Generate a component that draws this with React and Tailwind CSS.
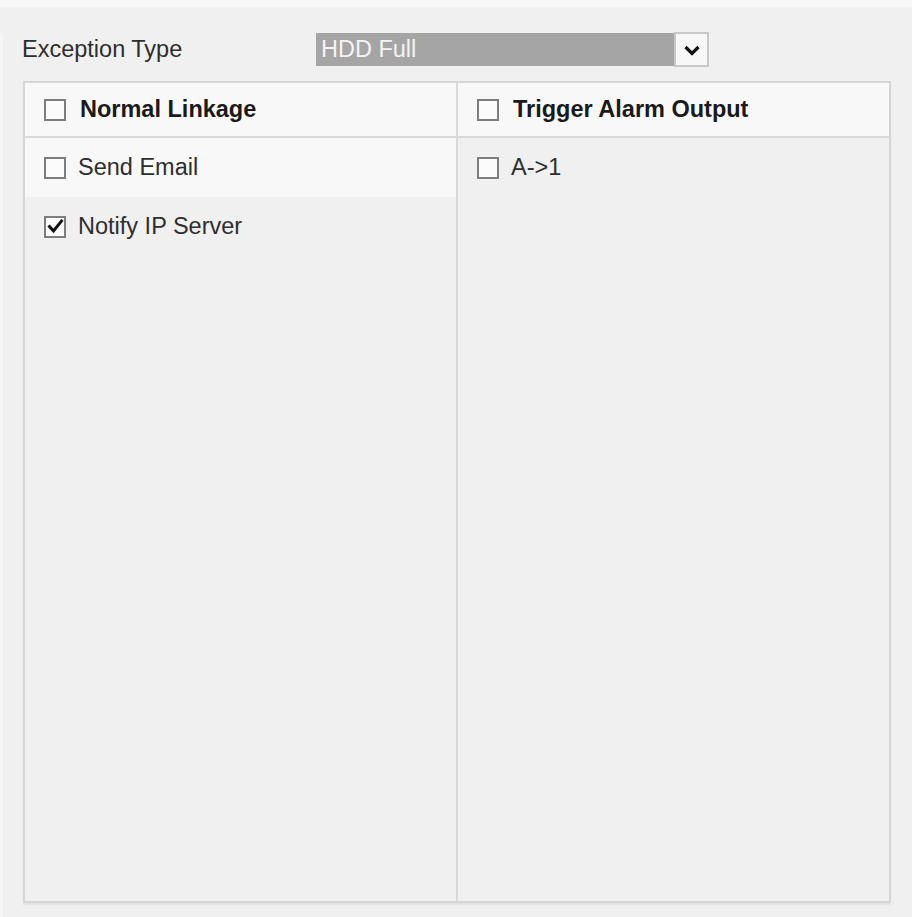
import React from "react";

const Box = ({ checked }) => (
    <span className="w-[22px] h-[22px] shrink-0 border-2 border-[#7d7d7d] bg-[#fbfbfb] flex items-center justify-center">
        {checked && (
            <svg width="17" height="17" viewBox="0 0 17 17">
                <polyline points="2.5,8.5 6.5,13 14.5,3" fill="none" stroke="#111" strokeWidth="3" strokeLinecap="square" />
            </svg>
        )}
    </span>
);

const Row = ({ label, checked, hl }) => (
    <div className={`h-[59px] flex items-center gap-[12px] pl-[19px] ${hl ? "bg-[#f8f8f8]" : ""}`}>
        <Box checked={checked} />
        <span className="text-[#2e2e2e]">{label}</span>
    </div>
);

const Column = ({ title, rows, right }) => (
    <div className={`flex flex-col ${right ? "" : "border-r-2 border-[#d9d9d9]"}`}>
        <div className="h-[55px] shrink-0 flex items-center gap-[14px] pl-[19px] bg-[#f8f8f8] border-b-2 border-[#d9d9d9]">
            <Box />
            <span className="font-bold text-[#1a1a1a]">{title}</span>
        </div>
        {rows.map((r) => (
            <Row key={r.label} {...r} />
        ))}
    </div>
);

export default function App() {
    return (
        <div className="w-[912px] h-[917px] bg-[#f0f0f0] font-[family-name:Liberation_Sans,Arial,sans-serif] text-[23.5px] leading-none overflow-hidden">
            <div className="h-[7px] bg-[#f7f7f7]" />
            <div className="border-l-[3px] border-[#f6f6f6] h-[910px]">
                <div className="mt-[26px] h-[33px] flex items-center pl-[19px]">
                    <span className="w-[294px] text-[#2e2e2e]">Exception Type</span>
                    <div className="w-[392px] h-[33px] bg-[#a5a5a5] flex items-center justify-between">
                        <span className="pl-[5px] text-[#f4f4f4]">HDD Full</span>
                        <span className="w-[35px] h-[35px] -mr-[1px] bg-[#f7f7f7] border-2 border-[#c8c8c8] flex items-center justify-center">
                            <svg width="18" height="12" viewBox="0 0 18 12">
                                <polyline points="2.5,3 9,9.5 15.5,3" fill="none" stroke="#111" strokeWidth="3.2" />
                            </svg>
                        </span>
                    </div>
                </div>
                <div className="mt-[15px] ml-[20px] w-[868px] h-[822px] border-2 border-[#d6d6d6] shadow-[0_2px_2px_rgba(0,0,0,0.06)] grid grid-cols-[433px_1fr]">
                    <Column
                        title="Normal Linkage"
                        rows={[
                            { label: "Send Email", hl: true },
                            { label: "Notify IP Server", checked: true },
                        ]}
                    />
                    <Column title="Trigger Alarm Output" rows={[{ label: "A->1" }]} right />
                </div>
            </div>
        </div>
    );
}
